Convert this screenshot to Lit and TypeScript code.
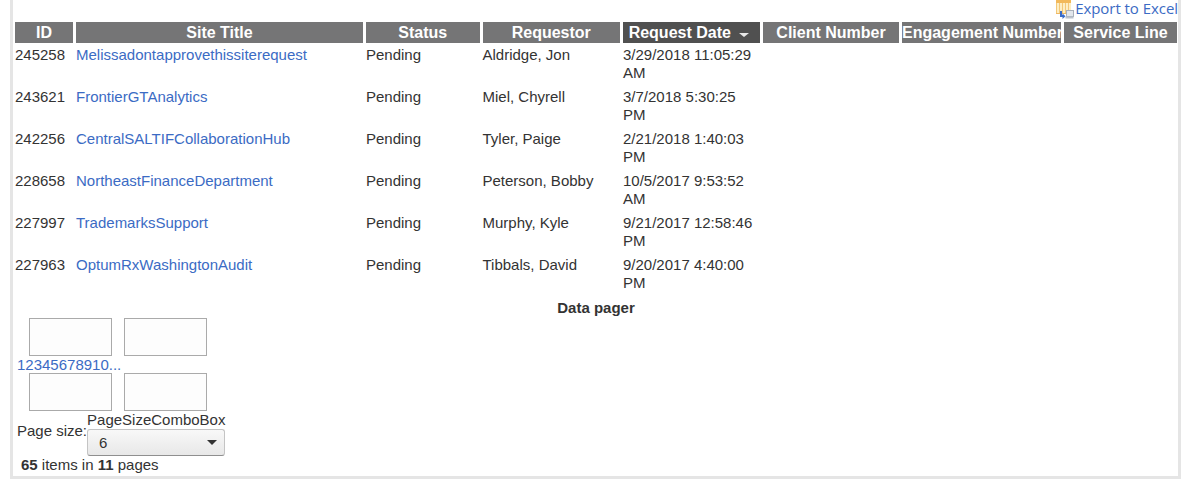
import { LitElement, css, html, svg } from 'lit';
import { customElement } from 'lit/decorators.js';

interface SiteRequest {
  id: string;
  title: string;
  requestor: string;
  date: string;
}

const ROWS: SiteRequest[] = [
  { id: '245258', title: 'Melissadontapprovethissiterequest', requestor: 'Aldridge, Jon', date: '3/29/2018 11:05:29 AM' },
  { id: '243621', title: 'FrontierGTAnalytics', requestor: 'Miel, Chyrell', date: '3/7/2018 5:30:25 PM' },
  { id: '242256', title: 'CentralSALTIFCollaborationHub', requestor: 'Tyler, Paige', date: '2/21/2018 1:40:03 PM' },
  { id: '228658', title: 'NortheastFinanceDepartment', requestor: 'Peterson, Bobby', date: '10/5/2017 9:53:52 AM' },
  { id: '227997', title: 'TrademarksSupport', requestor: 'Murphy, Kyle', date: '9/21/2017 12:58:46 PM' },
  { id: '227963', title: 'OptumRxWashingtonAudit', requestor: 'Tibbals, David', date: '9/20/2017 4:40:00 PM' },
];

const COLUMN_WIDTHS = [61, 290, 116.5, 140.5, 140, 139, 162, 113];

const EXCEL_ICON = svg`
  <rect x="0" y="0" width="15" height="14" fill="#fdeec4" />
  <rect x="0" y="0" width="15" height="3" fill="#f2b95a" />
  <path d="M0.5 3v11M3.5 3v11M6.5 3v11M9.5 3v11M12.5 3v11" stroke="#f3c878" fill="none" />
  <path d="M0 13.5h15" stroke="#eeb864" fill="none" />
  <path d="M5 11v5h2" stroke="#3a6cc8" stroke-width="2" fill="none" />
  <path d="M6.5 13.5l3 2.7-3 2.7z" fill="#3a6cc8" />
  <rect x="10.5" y="10.5" width="7" height="6" fill="#e3e7ec" stroke="#a9b0ba" />
  <rect x="9.5" y="16.5" width="8" height="2" fill="#bcc2cb" />
`;

@customElement('app-root')
export class AppRoot extends LitElement {
  static styles = css`
    :host {
      display: block;
      font-family: 'Liberation Sans', Arial, sans-serif;
      font-size: 15px;
      color: #333;
    }

    a {
      color: #3b6bc4;
      text-decoration: none;
    }

    .frame {
      box-sizing: border-box;
      width: 1171px;
      height: 479px;
      margin-left: 10px;
      padding-left: 2px;
      border: 3px solid #e5e5e5;
      border-top: 0;
      overflow: hidden;
    }

    .export {
      display: flex;
      justify-content: flex-end;
      align-items: flex-start;
      height: 22px;
      white-space: nowrap;
    }

    .export svg {
      flex: none;
      width: 18px;
      height: 19px;
      margin-right: 1px;
    }

    .export a {
      font-family: 'Open Sans', sans-serif;
      font-size: 15px;
      line-height: 17px;
      letter-spacing: -0.05px;
    }

    table {
      border-collapse: separate;
      border-spacing: 0;
      table-layout: fixed;
      width: 1162px;
    }

    caption {
      caption-side: bottom;
      font-weight: bold;
      padding: 5px 0 2px;
      line-height: 16px;
      color: #333;
    }

    th {
      height: 21px;
      padding: 0;
      border-right: 3px solid #fff;
      background: #757576;
      background-clip: padding-box;
      color: #fff;
      font-size: 16px;
      font-weight: bold;
      text-align: center;
      white-space: nowrap;
      overflow: hidden;
    }

    th:last-child {
      border-right: 0;
    }

    th.sorted {
      background: #505050;
      background-clip: padding-box;
    }

    .sort-arrow {
      display: inline-block;
      width: 0;
      height: 0;
      margin-left: 4px;
      margin-right: 5px;
      vertical-align: 1px;
      border: 5px solid transparent;
      border-top: 4px solid #e8e8e8;
      border-bottom: 0;
    }

    td {
      height: 36px;
      padding: 3px 3px 3px 0;
      line-height: 18px;
      vertical-align: top;
    }

    .pager {
      padding-left: 2px;
    }

    .page-buttons {
      display: flex;
      gap: 12px;
      padding-left: 12px;
    }

    .page-buttons span {
      box-sizing: border-box;
      width: 83px;
      height: 38px;
      background: #fdfdfd;
      border: 1px solid #aaa;
    }

    .numbers {
      display: block;
      line-height: 17px;
    }

    .size-row {
      display: flex;
      align-items: flex-end;
    }

    .size-label {
      padding-bottom: 16px;
      line-height: 18px;
    }

    .combo-label {
      line-height: 18px;
    }

    .combo {
      box-sizing: border-box;
      display: flex;
      align-items: center;
      justify-content: space-between;
      width: 138px;
      height: 27px;
      padding: 0 7px 0 11px;
      border: 1px solid #c4c4c4;
      border-bottom-color: #8f8f8f;
      border-radius: 3px;
      background: linear-gradient(#f8f8f8, #e8e8e8);
    }

    .combo i {
      width: 0;
      height: 0;
      border: 5px solid transparent;
      border-top: 5px solid #333;
      border-bottom: 0;
    }

    .summary {
      margin: 0;
      padding: 0 0 0 4px;
      line-height: 17px;
    }
  `;

  render() {
    return html`
      <div class="frame">
        <div class="export">
          <svg viewBox="0 0 18 19">${EXCEL_ICON}</svg>
          <a href="#">Export to Excel</a>
        </div>
        <table>
          <caption>Data pager</caption>
          <colgroup>
            ${COLUMN_WIDTHS.map((w) => html`<col style="width:${w}px" />`)}
          </colgroup>
          <thead>
            <tr>
              <th>ID</th>
              <th>Site Title</th>
              <th>Status</th>
              <th>Requestor</th>
              <th class="sorted">Request Date <span class="sort-arrow"></span></th>
              <th>Client Number</th>
              <th>Engagement Number</th>
              <th>Service Line</th>
            </tr>
          </thead>
          <tbody>
            ${ROWS.map(
              (row) => html`
                <tr>
                  <td>${row.id}</td>
                  <td><a href="#">${row.title}</a></td>
                  <td>Pending</td>
                  <td>${row.requestor}</td>
                  <td>${row.date}</td>
                  <td></td>
                  <td></td>
                  <td></td>
                </tr>
              `,
            )}
          </tbody>
        </table>
        <div class="pager">
          <div class="page-buttons"><span></span><span></span></div>
          <a class="numbers" href="#">12345678910...</a>
          <div class="page-buttons"><span></span><span></span></div>
          <div class="size-row">
            <span class="size-label">Page size:</span>
            <div>
              <div class="combo-label">PageSizeComboBox</div>
              <div class="combo"><span>6</span><i></i></div>
            </div>
          </div>
          <p class="summary"><b>65</b> items in <b>11</b> pages</p>
        </div>
      </div>
    `;
  }
}
